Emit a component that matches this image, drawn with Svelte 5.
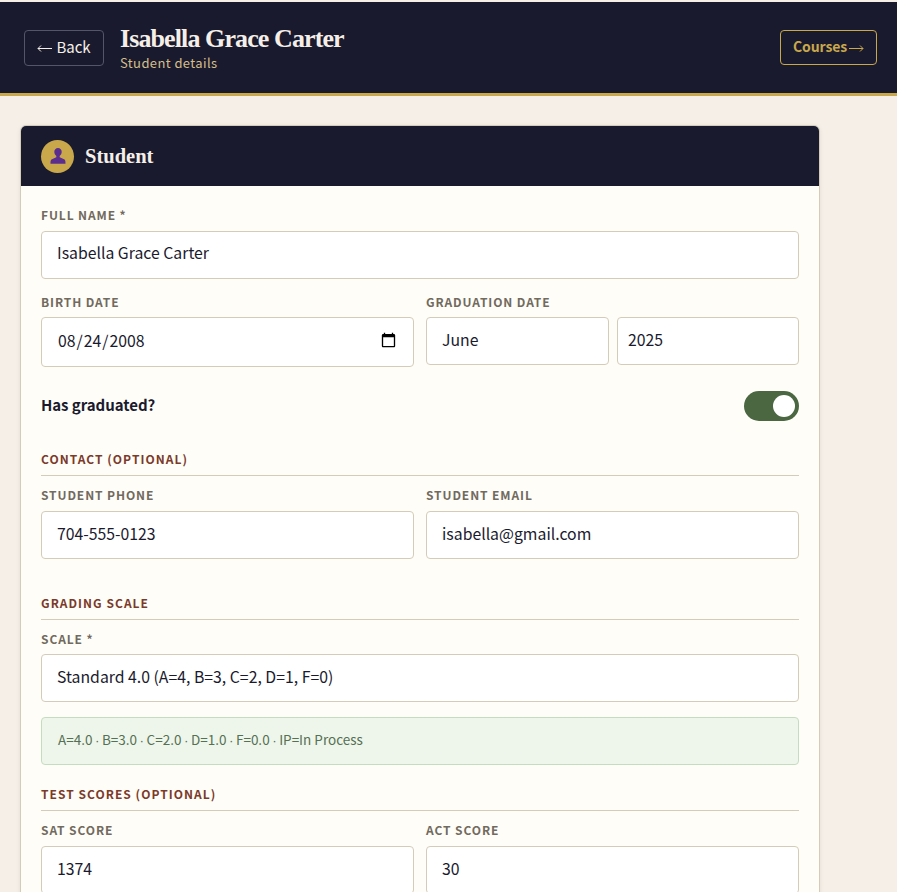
<script>
	let hasGraduated = $state(true);
	const scaleItems = ['A=4.0', 'B=3.0', 'C=2.0', 'D=1.0', 'F=0.0', 'IP=In Process'];
</script>

<div class="page">
	<header class="topbar">
		<button class="back">
			<svg class="arrow" viewBox="0 0 15 9" width="15" height="9" aria-hidden="true">
				<path d="M15 4.500H1M4 1.500 1 4.500l3 3" fill="none" stroke="currentColor" stroke-width="1" />
			</svg>
			Back
		</button>
		<div class="titles">
			<h1>Isabella Grace Carter</h1>
			<p>Student details</p>
		</div>
		<button class="courses">
			Courses
			<svg class="arrow" viewBox="0 0 15 9" width="15" height="9" aria-hidden="true">
				<path d="M0 4.500h14M11 1.500l3 3-3 3" fill="none" stroke="currentColor" stroke-width="1" />
			</svg>
		</button>
	</header>

	<main>
		<section class="card">
			<div class="card-head">
				<span class="avatar">
					<svg viewBox="0 0 16 16" width="18" height="18" aria-hidden="true">
						<path d="M8 .8C6 .8 4.700 2.300 4.700 4.300c0 1.600.7 2.900 1.800 3.600v1.200L2.600 10.900c-1 .5-1.300 1.200-1.300 3.900h13.400c0-2.700-.3-3.400-1.300-3.900L9.500 9.100V7.900c1.100-.7 1.800-2 1.800-3.600C11.300 2.300 10 .8 8 .8z" fill="#5b2d8e" />
					</svg>
				</span>
				<h2>Student</h2>
			</div>

			<div class="card-body">
				<label class="field">
					<span class="label">Full name *</span>
					<input class="full-name" type="text" value="Isabella Grace Carter" />
				</label>

				<div class="row dates">
					<label class="field">
						<span class="label">Birth date</span>
						<input class="date" type="date" value="2008-08-24" />
					</label>
					<div class="field">
						<span class="label">Graduation date</span>
						<div class="grad">
							<input class="month" type="text" value="June" />
							<input class="year" type="text" value="2025" />
						</div>
					</div>
				</div>

				<div class="toggle-row">
					<span>Has graduated?</span>
					<button class="toggle" class:on={hasGraduated} onclick={() => (hasGraduated = !hasGraduated)} aria-label="Has graduated?">
						<span class="knob"></span>
					</button>
				</div>

				<h3 class="section first">Contact (optional)</h3>
				<div class="row">
					<label class="field">
						<span class="label">Student phone</span>
						<input type="text" value="704-555-0123" />
					</label>
					<label class="field">
						<span class="label">Student email</span>
						<input type="text" value="isabella@gmail.com" />
					</label>
				</div>

				<h3 class="section second">Grading scale</h3>
				<label class="field">
					<span class="label">Scale *</span>
					<input type="text" value="Standard 4.0 (A=4, B=3, C=2, D=1, F=0)" />
				</label>
				<div class="scale-note">
					<span>
						{#each scaleItems as item, i}{#if i > 0}<span class="dot">·</span>{/if}{item}{/each}
					</span>
				</div>

				<h3 class="section third">Test scores (optional)</h3>
				<div class="row">
					<label class="field">
						<span class="label">SAT score</span>
						<input type="text" value="1374" />
					</label>
					<label class="field">
						<span class="label">ACT score</span>
						<input type="text" value="30" />
					</label>
				</div>
			</div>
		</section>
	</main>
</div>

<style>
	:global(body) {
		margin: 0;
		background: #f5efe8;
	}

	.page {
		height: 100vh;
		overflow: hidden;
		padding-top: 2px;
		box-sizing: border-box;
		background: #f5efe8;
		font-family: "Noto Sans CJK SC", "Noto Sans", sans-serif;
		color: #1a1a2e;
	}

	.topbar {
		display: flex;
		align-items: flex-start;
		padding: 24px 20px 0 24px;
		height: 67px;
		background: #1a1a2e;
		border-bottom: 3px solid #c9a84c;
	}

	button {
		font-family: inherit;
		background: transparent;
		cursor: pointer;
	}

	.back,
	.courses {
		display: flex;
		align-items: center;
		justify-content: center;
		margin-top: 4px;
		padding: 0 0 3px;
		border-radius: 4px;
		line-height: 20px;
	}

	.arrow {
		flex: none;
		margin-top: 4px;
	}

	.back {
		gap: 4px;
		width: 80px;
		height: 36px;
		border: 1px solid #55556a;
		color: #f5efe8;
		font-size: 15px;
	}

	.titles {
		margin-left: 16px;
	}

	h1 {
		margin: 0;
		font-family: "Liberation Serif", serif;
		font-size: 26px;
		line-height: 26px;
		letter-spacing: -0.9px;
		font-weight: 700;
		color: #f5efe8;
	}

	.titles p {
		margin: 2px 0 0;
		font-size: 13px;
		line-height: 18px;
		letter-spacing: 0.4px;
		color: #d4bf8a;
	}

	.courses {
		gap: 2px;
		width: 97px;
		height: 35px;
		margin-left: auto;
		border: 1px solid #c9a84c;
		color: #c9a84c;
		font-size: 14px;
		font-weight: 600;
		letter-spacing: -0.1px;
	}

	main {
		padding: 29px 20px 0;
	}

	.card {
		width: 800px;
		box-sizing: border-box;
		overflow: hidden;
		background: #fffdf8;
		border: 1px solid #d4ccb8;
		border-radius: 6px;
		box-shadow: 0 1px 4px rgba(0, 0, 0, 0.08);
	}

	.card-head {
		display: flex;
		align-items: center;
		gap: 11px;
		height: 60px;
		padding: 0 20px;
		background: #1a1a2e;
	}

	.avatar {
		display: flex;
		align-items: center;
		justify-content: center;
		width: 33px;
		height: 33px;
		border-radius: 50%;
		background: #c9a84c;
	}

	h2 {
		margin: 0;
		font-family: "Liberation Serif", serif;
		font-size: 20.500px;
		line-height: 26px;
		font-weight: 700;
		color: #f5efe8;
	}

	.card-body {
		display: flex;
		flex-direction: column;
		padding: 20px 20px 24px;
	}

	.field {
		display: flex;
		flex-direction: column;
		min-width: 0;
	}

	.label {
		margin-bottom: 6.500px;
		font-size: 12px;
		line-height: 18px;
		font-weight: 600;
		letter-spacing: 0.9px;
		text-transform: uppercase;
		color: #716a5e;
	}

	input {
		width: 100%;
		height: 48px;
		box-sizing: border-box;
		padding: 0 15px 3px;
		background: #fff;
		border: 1px solid #d4ccb8;
		border-radius: 4px;
		font-family: inherit;
		font-size: 15.800px;
		line-height: 24px;
		color: #1a1a2e;
		outline: none;
	}

	.full-name {
		padding-bottom: 5px;
	}

	.row {
		display: grid;
		grid-template-columns: 1fr 1fr;
		gap: 12px;
		margin-top: 15px;
	}

	.row.dates {
		margin-top: 14px;
	}

	.date {
		height: 50px;
		padding: 0 15px 2px;
	}

	.date::-webkit-calendar-picker-indicator {
		width: 17px;
		height: 18px;
		margin-left: 0;
		margin-right: 1px;
		padding: 0;
	}

	.grad {
		display: grid;
		grid-template-columns: 183px 1fr;
		gap: 8px;
	}

	.year {
		padding: 0 10px 3px;
	}

	.toggle-row {
		display: flex;
		align-items: center;
		justify-content: space-between;
		margin-top: 24px;
		height: 30px;
		font-size: 15px;
		font-weight: 600;
		line-height: 20px;
		letter-spacing: -0.05px;
	}

	.toggle-row > span {
		padding-bottom: 3px;
	}

	.toggle {
		position: relative;
		width: 55px;
		height: 30px;
		padding: 0;
		border: none;
		border-radius: 15px;
		background: #c4bba5;
	}

	.toggle.on {
		background: #4a6741;
	}

	.knob {
		position: absolute;
		top: 4px;
		left: 4px;
		width: 22px;
		height: 22px;
		border-radius: 50%;
		background: #fff;
	}

	.toggle.on .knob {
		left: 29px;
	}

	.section {
		margin: 0;
		padding-bottom: 7px;
		border-bottom: 1px solid #d4ccb8;
		font-size: 12px;
		line-height: 18px;
		font-weight: 600;
		letter-spacing: 1.030px;
		text-transform: uppercase;
		color: #7b3a2a;
	}

	.section.first {
		margin-top: 29px;
	}

	.section.second {
		margin-top: 35px;
		margin-bottom: 10px;
	}

	.section.third {
		margin-top: 20px;
	}

	.section + .row {
		margin-top: 10px;
	}

	.scale-note {
		margin-top: 15px;
		height: 48px;
		box-sizing: border-box;
		padding: 0 16px 3px;
		display: flex;
		align-items: center;
		background: #eef6ec;
		border: 1px solid #c5dcc0;
		border-radius: 4px;
		font-size: 13.500px;
		line-height: 20px;
		color: #557052;
	}

	.dot {
		margin: 0 2.500px;
		font-family: "Liberation Sans", sans-serif;
	}
</style>
